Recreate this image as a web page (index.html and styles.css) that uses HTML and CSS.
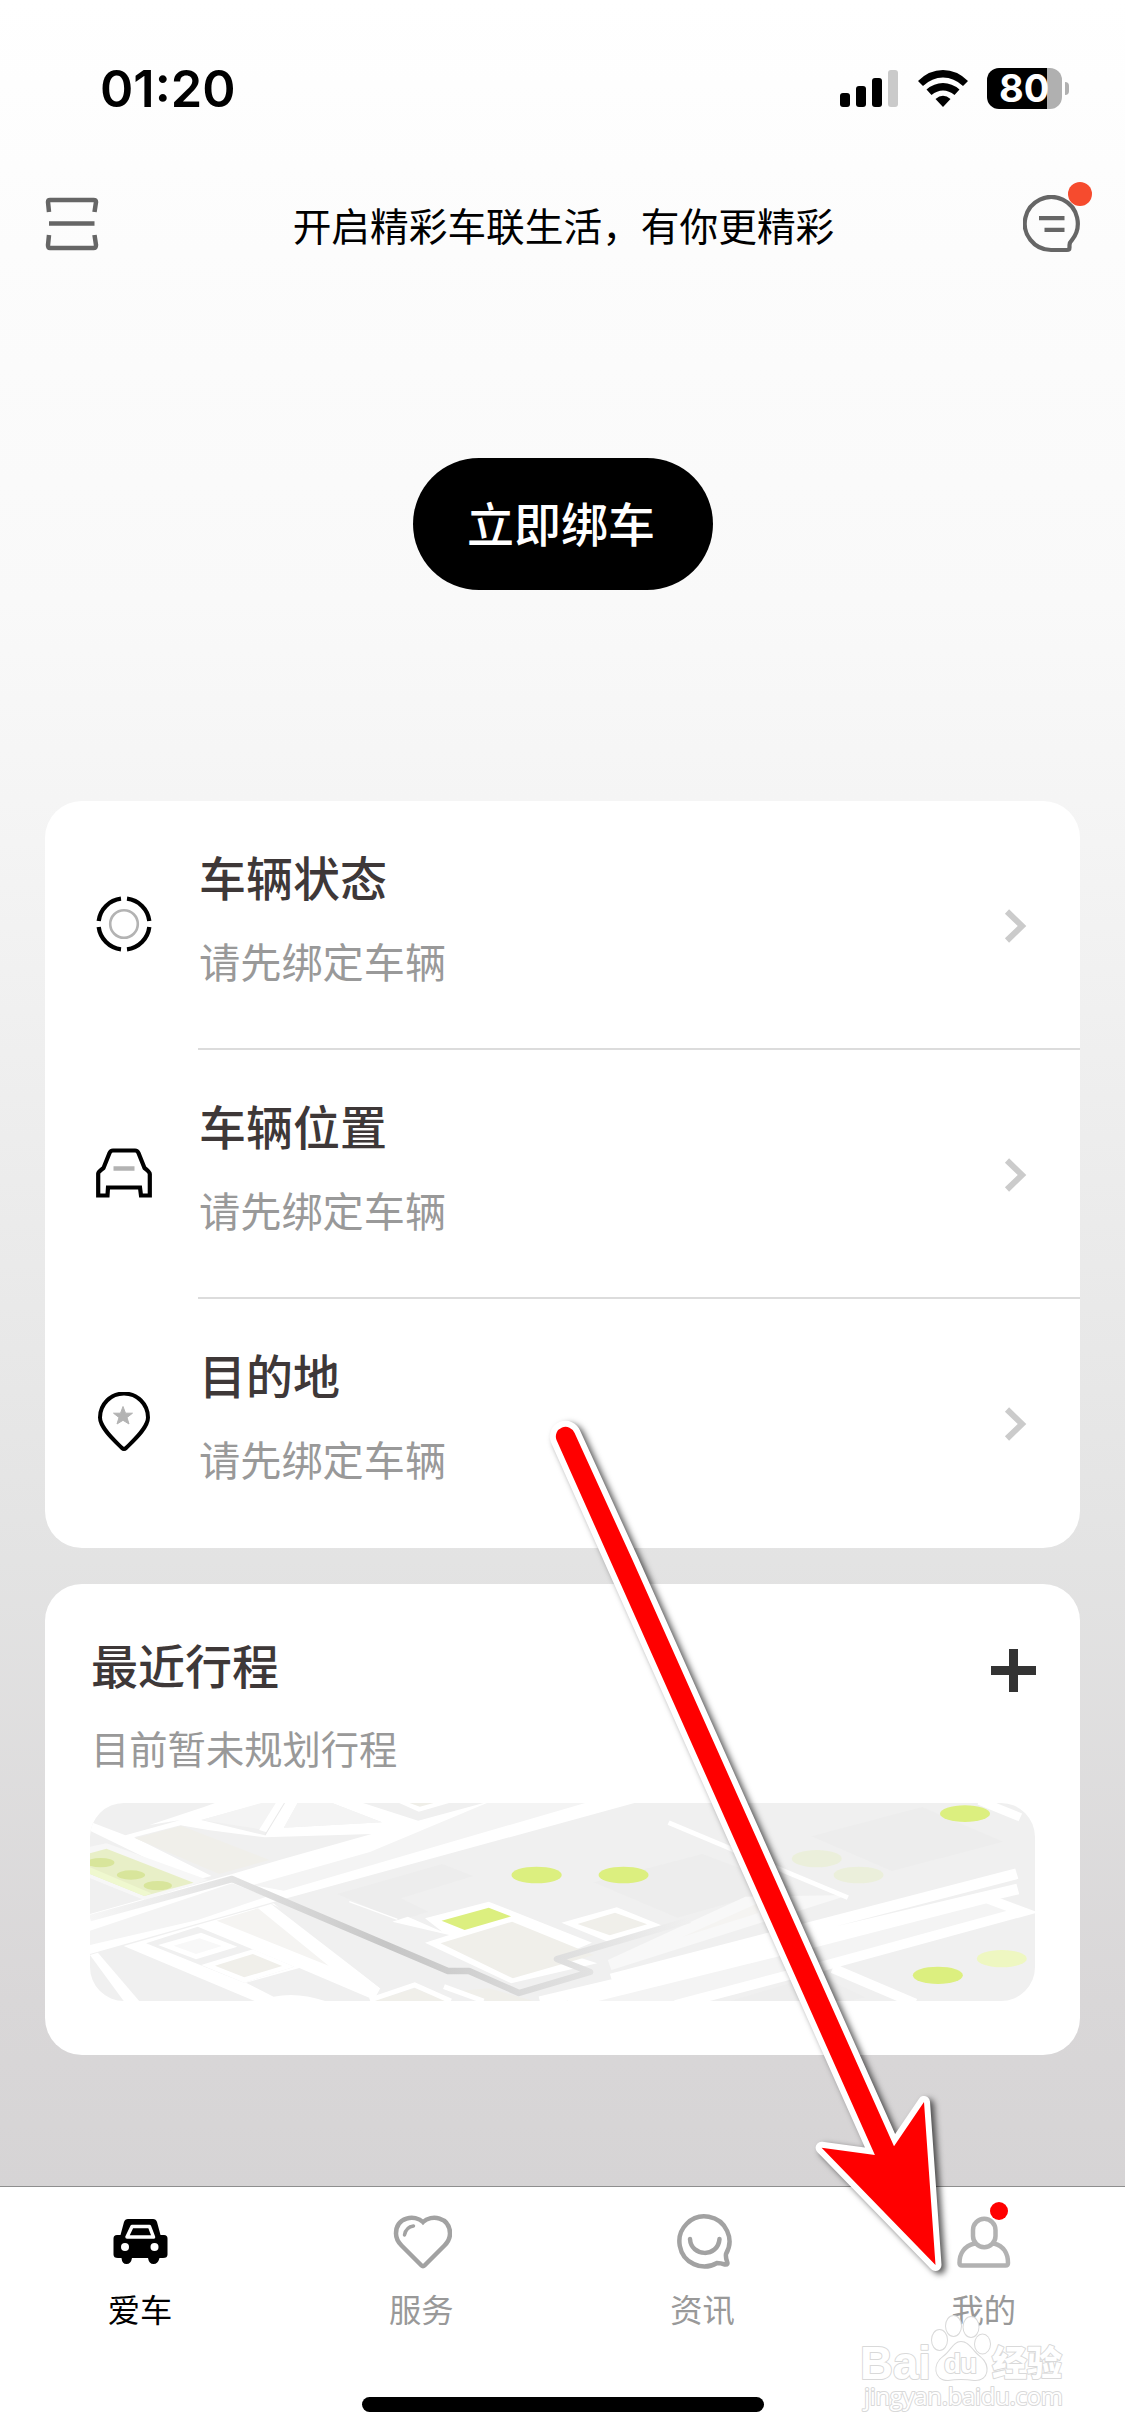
FILE: index.html
```html
<!DOCTYPE html>
<html lang="zh-CN">
<head>
<meta charset="utf-8">
<title>爱车</title>
<link rel="stylesheet" href="styles.css">
</head>
<body>
<div class="app">
  <header class="status">
    <span class="time">01:20</span>
    <div class="status-icons">
      <svg class="signal" width="58" height="37" viewBox="0 0 58 37"><rect y="23" width="10" height="14" rx="3"/><rect x="16" y="16" width="10" height="21" rx="3"/><rect x="32" y="8" width="10" height="29" rx="3"/><rect x="48" width="10" height="37" rx="3" fill="#cacaca"/></svg>
      <svg class="wifi" width="50" height="37" viewBox="0 0 50 37"><path d="M0 11Q11 0 25 0T50 11L45 16Q36 7.500 25 7.500T5 16Z"/><path d="M8.500 19.500Q16 13 25 13T41.500 19.500L36.500 25Q31 20.500 25 20.500T13.500 25Z"/><path d="M17.500 29Q25 22.500 32.500 29L25 37Z"/></svg>
      <div class="battery"><span class="level">80</span><i class="tip"></i></div>
    </div>
  </header>

  <div class="topbar">
    <svg width="54" height="54" viewBox="0 0 54 54" fill="none" stroke="#666" stroke-width="4.500"><path d="M4 15 3 5Q3 3 5 3H48.500Q51 3 51 5L49.500 15M4 38 3 48Q3 51 5 51H48.500Q51 51 51 48L49.500 38M4 26.500H49.500"/></svg>
    <h1 class="headline">开启精彩车联生活，有你更精彩</h1>
    <div class="message">
      <svg width="57" height="58" viewBox="0 0 57 58" fill="none" stroke="#666" stroke-width="4.200"><path d="M28 55A26.500 26.500 0 1 1 49 45Q46.500 47.500 46.500 50V52.500Q46.500 55 44 55Z" stroke-linejoin="round"/><path d="M16 23.200H41.500M21.500 34.800H41.500" stroke-width="4.300"/></svg>
      <i class="dot"></i>
    </div>
  </div>

  <main class="content">
    <button class="bind">立即绑车</button>

    <section class="card list">
      <div class="row">
        <div class="row-icon"><svg width="56" height="56" viewBox="0 0 56 56" fill="none"><path d="M25 2.700A25.500 25.500 0 0 0 2.700 25M31 2.700A25.500 25.500 0 0 1 53.300 25M53.300 31A25.500 25.500 0 0 1 31 53.300M25 53.300A25.500 25.500 0 0 1 2.700 31" stroke="#000" stroke-width="4.300"/><circle cx="28" cy="28" r="13.800" stroke="#b3b3b3" stroke-width="2.600"/></svg></div>
        <div class="row-body"><div><h2>车辆状态</h2><p>请先绑定车辆</p></div><svg class="chevron" width="24" height="36" viewBox="0 0 24 36"><path d="M3 3.500 18 18 3 32.500"/></svg></div>
      </div>
      <div class="row">
        <div class="row-icon"><svg width="56" height="50" viewBox="0 0 56 50" fill="none"><path d="M2.200 47.500V25.500Q2.200 24 7.500 20L13.500 5Q14.500 2.500 17 2.500H39Q41.500 2.500 42.500 5L48.500 20Q53.800 24 53.800 26V47.500H45L44 39.500H12L11.500 47.500Z" stroke="#000" stroke-width="4.200"/><path d="M17.500 20.500H38.500" stroke="#b3b3b3" stroke-width="4.500"/></svg></div>
        <div class="row-body"><div><h2>车辆位置</h2><p>请先绑定车辆</p></div><svg class="chevron" width="24" height="36" viewBox="0 0 24 36"><path d="M3 3.500 18 18 3 32.500"/></svg></div>
      </div>
      <div class="row">
        <div class="row-icon"><svg width="52" height="60" viewBox="0 0 52 60" fill="none"><path d="M24 56C17 49 2 36 2 25.500A24 24 0 0 1 50 25.500C50 36 35 49 28 56Q26 58 24 56Z" stroke="#000" stroke-width="4"/><path d="M25 14.500 27.500 21.200H34.500L29 25.500 31 32 25 28.300 19 32 21 25.500 15.500 21.200H22.500Z" fill="#b3b3b3" stroke="#b3b3b3"/></svg></div>
        <div class="row-body"><div><h2>目的地</h2><p>请先绑定车辆</p></div><svg class="chevron" width="24" height="36" viewBox="0 0 24 36"><path d="M3 3.500 18 18 3 32.500"/></svg></div>
      </div>
    </section>

    <section class="card trips">
      <div class="trips-head">
        <div><h2>最近行程</h2><p>目前暂未规划行程</p></div>
        <svg width="45" height="43" viewBox="0 0 45 43" fill="#333"><path d="M18 0H27V17H45V26H27V43H18V26H0V17H18Z"/></svg>
      </div>
      <svg class="map" viewBox="0 0 945 198">
        <rect width="945" height="198" fill="#f0f0f0"/>
        <g transform="translate(-30 -203) scale(.34436 .33333)">
          <path d="M260 675 420 620 450 609H525L590 609 410 660 595 706 640 609H690L650 683 935 667 790 609H880L1040 662 1230 609H1700L1700 560 1700 600 640 900 87 1062V942L500 822 645 778 905 702 595 712 430 690 350 676 215 712 440 828 385 842 87 692V665L190 706 350 660Z" fill="#fff"/>
          <path d="M410 660 585 609H640L595 690ZM690 609H790L935 667 650 683Z" fill="#f4f4f4"/>
          <path d="M578 690 632 600H668L610 700Z" fill="#fff"/><path d="M595 706 652 609" stroke="#e9e9e9" stroke-width="3"/>
          <path d="M1240 609H1525L650 872 560 855 900 756ZM87 992 500 850 600 890 400 960 87 1035Z" fill="#f4f4f4"/>
          <path d="M985 609 1042 635 1130 609Z" fill="#fff"/><path d="M1015 609 1045 620 1085 609Z" fill="#efeee8"/>
          <path d="M218 715 352 677 608 780 462 822Z" fill="#f0efea"/>
          <path d="M87 740 135 730 430 840 245 900 87 835Z" fill="#f7f7f7"/>
          <path d="M87 760 135 746 388 848 245 888 87 822Z" fill="#e8efc7"/><path d="M87 802 265 880 245 888 87 822Z" fill="#eff8cf"/>
          <g fill="#d8e59b"><ellipse cx="118" cy="788" rx="40" ry="14"/><ellipse cx="206" cy="825" rx="41" ry="14"/><ellipse cx="284" cy="857" rx="41" ry="14"/></g>
          <path d="M87 835 230 898 87 940Z" fill="#f0f0f0"/>
          <path d="M185 1038 620 910 930 1165 910 1203H565Z" fill="#fff"/>
          <path d="M250 1030 400 980 680 1100 535 1148Z" fill="#f0f0f0"/>
          <path d="M285 1035 410 998 515 1040 395 1078Z" fill="#fff"/><path d="M330 1037 405 1015 470 1038 395 1062Z" fill="#f8f8f8"/>
          <path d="M410 1095 560 1048 680 1100 535 1148Z" fill="#fff"/><path d="M450 1097 560 1062 645 1098 535 1132Z" fill="#f0efea"/>
          <path d="M455 962 575 925 780 1097Z" fill="#f5f4f2"/>
          <path d="M87 1065 110 1058 230 1203H185Z" fill="#fff"/>
          <path d="M695 1104 920 1203H770Q690 1175 620 1190L540 1148Z" fill="#f0f0f0"/>
          <path d="M610 910 890 1045 1120 1140 1190 1125 1100 1160 1130 1203H1080L930 1165Z" fill="#f0f0f0"/>
          <path d="M805 882 1110 792 1200 828 990 895 1070 935 985 962Z" fill="#ededed"/>
          <path d="M840 905 980 958" stroke="#fff" stroke-width="4"/>
          <path d="M965 965 1010 950 1110 995 1060 955 1245 905 1545 1028 1470 1060 1560 1090 1310 1150 1060 1028 1130 1005Z" fill="#fff"/>
          <path d="M1108 962 1245 923 1310 949 1175 990Z" fill="#dcef7f"/>
          <path d="M1105 1030 1313 965 1550 1065 1315 1135Z" fill="#f0efea"/>
          <path d="M910 1203 1030 1165 1125 1203ZM1165 1172 1245 1165 1375 1203H1240Z" fill="#f0efea"/>
          <path d="M900 1200 1030 1155 1135 1203M1115 1160 1230 1203" fill="none" stroke="#fff" stroke-width="15"/>
          <ellipse cx="1384" cy="825" rx="73" ry="25" fill="#dcef7f"/>
        </g>
        <g transform="translate(450 -243) scale(.35714 .33333)">
          <path d="M150 967 455 882 700 980 560 1020 385 1073ZM760 829 1070 741 1297 845 985 933Z" fill="#ededed"/>
          <path d="M60 1088 215 1042 345 1098 190 1145Z" fill="#fff"/><path d="M105 1092 210 1058 300 1093 195 1126Z" fill="#f0efea"/>
          <path d="M190 1200 575 1010 865 1005 200 1230Z" fill="#f8f8f8"/><path d="M400 1130 610 1030V1060Z" fill="#f5f4f2"/>
          <path d="M200 1257 1335 941M0 1325 1338 987" fill="none" stroke="#fff" stroke-width="32"/>
          <path d="M150 1325 1240 1025 1310 1053 830 1195 440 1325Z" fill="#f4f4f4"/>
          <path d="M80 1330 760 1150 1250 1015 1350 1055 810 1213 380 1335M820 1225 1050 1330" fill="none" stroke="#fff" stroke-width="29"/>
          <path d="M535 1322 780 1245 910 1312 870 1322Z" fill="#eee"/>
          <path d="M360 788 862 1013" fill="none" stroke="#fff" stroke-width="14"/><path d="M1230 722 1345 772" stroke="#fff" stroke-width="25"/>
          <g fill="#dcef7f"><ellipse cx="234" cy="945" rx="70" ry="25"/><ellipse cx="1190" cy="761" rx="70" ry="25"/><ellipse cx="1114" cy="1246" rx="70" ry="26"/><ellipse cx="1293" cy="1196" rx="70" ry="26" fill="#eef7c1"/><ellipse cx="775" cy="896" rx="70" ry="26" fill="#ebefdb"/><ellipse cx="892" cy="945" rx="70" ry="25" fill="#ebefdb"/></g>
        </g>
        <defs><linearGradient id="route" gradientUnits="userSpaceOnUse" x1="0" x2="600"><stop offset="0" stop-color="#f6f6f6"/><stop offset=".24" stop-color="#e2e2e2"/><stop offset=".5" stop-color="#c6c6c6"/><stop offset=".61" stop-color="#cecece"/><stop offset=".72" stop-color="#dadada"/><stop offset=".84" stop-color="#e2e2e2"/><stop offset="1" stop-color="#f0f0f0"/></linearGradient></defs>
        <path d="M0 115 142 76 358 168H379L429 190 500 169 467 156 600 117" fill="none" stroke="url(#route)" stroke-width="6.500" stroke-linejoin="round"/>
      </svg>
    </section>
  </main>

  <nav class="tabs">
    <div class="tab active">
      <svg width="60" height="60" viewBox="-1 0 60 60"><path d="M16 8H41Q44 8 45 11L48.500 24H52Q55.500 24 55.500 27.500V43.500Q55.500 47 51 47H47.500Q46 53 41.500 53T36 47H20Q19 53 14.500 53T9.500 47H6Q1.500 47 1.500 43.500V27.500Q1.500 24 5 24H8.500L12 11Q13 8 16 8Z"/><path d="M20 15.500H37.500L41.500 26H15Z" fill="none" stroke="#fff" stroke-width="3.500" stroke-linejoin="round"/><circle cx="13" cy="36" r="4" fill="#fff"/><circle cx="42.500" cy="36" r="4" fill="#fff"/></svg>
      <span>爱车</span>
    </div>
    <div class="tab">
      <svg width="60" height="60" viewBox="0 0 60 60"><path d="M31 11C39 3 58 6 58 22.500Q58 29 52.500 34.500L32.500 54.500Q31 56 29.500 54.500L9.500 34.500Q4 29 4 22.500C4 6 23 3 31 11Z"/><path d="M12.500 24Q14 16 21.500 15" stroke-linecap="round" stroke-width="3.500"/></svg>
      <span>服务</span>
    </div>
    <div class="tab">
      <svg width="60" height="60" viewBox="-1 1 60 60"><path d="M43 53A25 25 0 1 1 52 44Q51.500 47 53 51.500 54.500 55 51 54.500 46.500 53 43 53Z"/><path d="M16 29C17 47 44 48 45.500 29" stroke-linecap="round"/></svg>
      <span>资讯</span>
    </div>
    <div class="tab">
      <div class="mine"><svg class="person" width="60" height="60" viewBox="0 0 60 60"><path d="M19 19A11 11 0 0 1 41.500 19V25A11 11 0 0 1 19 25ZM20.500 32.500C10 35 5.500 43 5.500 52Q5.500 54.500 8 54.500H51.500Q54 54.500 54 52C54 43 50 35 40 32.500"/></svg><i class="badge"></i></div>
      <span>我的</span>
    </div>
  </nav>
  <div class="home"></div>

  <svg class="watermark" width="230" height="125" viewBox="0 0 230 125">
    <text x="10" y="78.500" class="wm-brand" textLength="71" lengthAdjust="spacingAndGlyphs">Bai</text>
    <g class="wm-paw"><ellipse cx="89.500" cy="40" rx="7.500" ry="10"/><ellipse cx="103.500" cy="26" rx="7.500" ry="10"/><ellipse cx="121" cy="27" rx="7.500" ry="10"/><ellipse cx="132.500" cy="44" rx="7.500" ry="9.500"/><path d="M111 42C103 42 101 52 93 57 83 64 84 80 98 80Q104 79 111 79T124 80C139 81 140 65 130 57 122 51 119 42 111 42Z"/></g>
    <text x="94" y="73" class="wm-du" textLength="33">du</text>
    <text x="142" y="76" class="wm-cn">经验</text>
    <text x="14" y="105" class="wm-url" textLength="199">jingyan.baidu.com</text>
  </svg>

  <svg class="arrow" width="420" height="880" viewBox="540 1410 420 880"><path d="M556.500 1440A9.700 9.700 0 0 1 574.600 1433L632.500 1560 894 2146.300 924 2102 935.500 2265 821.600 2147.700 874.900 2155 610 1560Z"/></svg>
</div>
</body>
</html>
```
FILE: styles.css
```css
* { box-sizing: border-box; }
body { margin: 0; font-family: "Noto Sans CJK SC", sans-serif; }
h1, h2, p { margin: 0; font-weight: 400; }
svg { display: block; flex: none; }

.app {
  position: relative;
  display: flex;
  flex-direction: column;
  width: 1125px;
  height: 2436px;
  overflow: hidden;
  background: linear-gradient(#fff 0, #fcfcfc 250px, #f9f9f9 600px, #f5f5f5 800px, #e3e3e3 1560px, #d9d7d8 2000px, #d6d4d5 2186px);
}

.status {
  display: flex;
  align-items: center;
  justify-content: space-between;
  height: 177px;
  padding: 0 56px 0 100px;
}
.time { font: 600 50.5px/60px Inter, sans-serif; letter-spacing: 0; }
.status-icons { display: flex; align-items: center; gap: 19.5px; }
.battery {
  display: flex;
  align-items: center;
  gap: 3px;
}
.level {
  width: 75px;
  height: 41px;
  padding-left: 12px;
  border-radius: 12px;
  background: linear-gradient(90deg, #000 60px, #b0b0b0 60px);
  color: #fff;
  font: 700 38px/41px Inter, sans-serif;
}
.tip { width: 4px; height: 13px; border-radius: 0 4px 4px 0; background: #b0b0b0; }

.topbar {
  display: flex;
  align-items: center;
  justify-content: space-between;
  height: 94px;
  padding: 0 45px;
}
.headline { padding: 0 0 1px 5px; font-size: 38.7px; line-height: 58px; color: #000; }
.message { position: relative; }
.dot { position: absolute; right: -12px; top: -13px; width: 24px; height: 24px; border-radius: 50%; background: #f64b2e; }

.content { display: flex; flex-direction: column; flex: 1; padding: 187px 45px 0; }
.bind {
  align-self: center;
  width: 300px;
  height: 132px;
  margin-bottom: 211px;
  padding: 0 3px 4px 0;
  border: 0;
  border-radius: 66px;
  background: #000;
  color: #fff;
  font: 500 47px/128px "Noto Sans CJK SC", sans-serif;
}
.card { border-radius: 37px; background: #fff; }
.card h2 { font-size: 47px; font-weight: 500; line-height: 60px; color: #3e3838; }
.card p { color: #999; }

.row { display: flex; height: 249px; }
.row-icon {
  display: flex;
  align-items: center;
  justify-content: center;
  flex: none;
  width: 153px;
  padding: 0 0 4px 4px;
}
.row-body {
  display: flex;
  align-items: center;
  justify-content: space-between;
  flex: 1;
  padding: 0 52px 14px 1px;
  border-bottom: 2px solid #dcdcdc;
}
.row:last-child .row-body { border-bottom-color: transparent; }
.row p { margin-top: 24px; font-size: 41.2px; line-height: 60px; }
.chevron { margin-top: 16px; fill: none; stroke: #cbcbcb; stroke-width: 6px; }

.trips { height: 471px; margin-top: 36px; padding: 50px 45px 0; }
.trips-head { display: flex; justify-content: space-between; height: 169px; padding: 0 0 0 1px; }
.trips-head svg { margin: 15px -1px 0 0; }
.trips p { margin-top: 24px; font-size: 38.3px; line-height: 60px; }
.map { width: 945px; height: 198px; border-radius: 34px; }

.tabs {
  display: flex;
  height: 211px;
  flex: none;
  padding-top: 24px;
  border-top: 1px solid #8e8e8e;
  background: #fff;
}
.tab { display: flex; flex-direction: column; align-items: center; flex: 1; color: #999; font-size: 32.3px; line-height: 46px; }
.tab svg { fill: none; stroke: #a2a2a2; stroke-width: 4.5px; }
.tab svg.person { stroke: #b2b2b2; }
.tab.active { color: #000; }
.tab.active svg { fill: #000; stroke: none; }
.tab span { margin-top: 14px; padding-right: 1px; }
.mine { position: relative; }
.badge { position: absolute; left: 36px; top: -9px; width: 18px; height: 18px; border-radius: 50%; background: #f00; }
.home { height: 39px; flex: none; background: #fff; }
.home::before { content: ""; display: block; width: 402px; height: 15px; margin: 0 auto; border-radius: 8px; background: #000; }

.watermark { position: absolute; left: 850px; top: 2300px; }
.watermark text, .wm-paw { fill: #fff; stroke: #d9d9d9; stroke-width: 2px; paint-order: stroke; stroke-linejoin: round; }
.wm-brand { font: 700 47px "Liberation Sans", sans-serif; }
.wm-du { font: 700 28px "Liberation Sans", sans-serif; }
.wm-cn { font: 900 35px "Noto Sans CJK SC", sans-serif; }
.wm-url { font: 400 24px "Open Sans", sans-serif; }

.arrow { position: absolute; left: 540px; top: 1410px; filter: drop-shadow(4px 3px 3px rgba(0, 0, 0, .65)); }
.arrow path { fill: #f00; stroke: #fff; stroke-width: 12px; stroke-linejoin: round; paint-order: stroke; }
```
